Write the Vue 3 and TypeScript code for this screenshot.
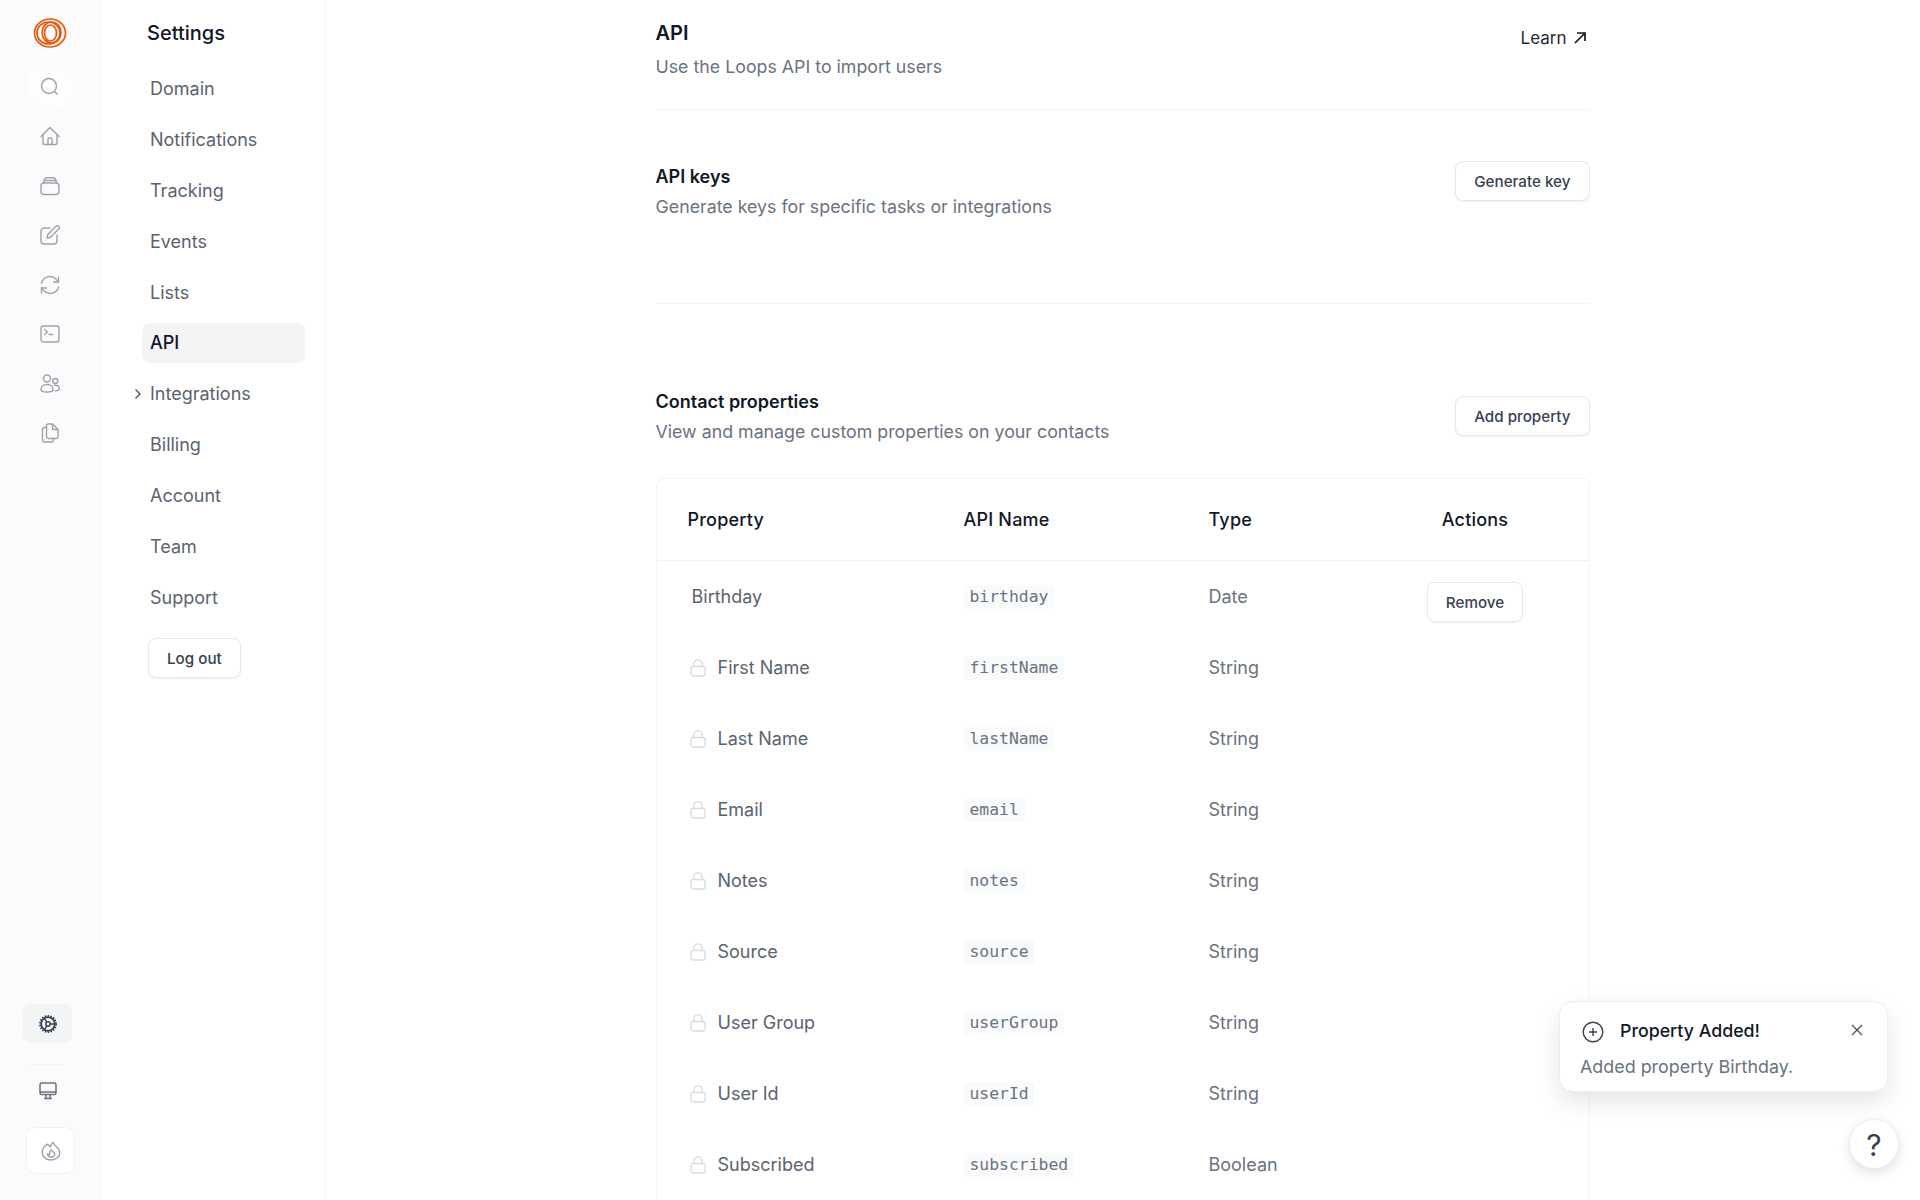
<script setup lang="ts">
type Prop = { label: string; api: string; type: string; locked: boolean };

const navItems = [
  "Domain",
  "Notifications",
  "Tracking",
  "Events",
  "Lists",
  "API",
  "Integrations",
  "Billing",
  "Account",
  "Team",
  "Support",
];

const props: Prop[] = [
  { label: "Birthday", api: "birthday", type: "Date", locked: false },
  { label: "First Name", api: "firstName", type: "String", locked: true },
  { label: "Last Name", api: "lastName", type: "String", locked: true },
  { label: "Email", api: "email", type: "String", locked: true },
  { label: "Notes", api: "notes", type: "String", locked: true },
  { label: "Source", api: "source", type: "String", locked: true },
  { label: "User Group", api: "userGroup", type: "String", locked: true },
  { label: "User Id", api: "userId", type: "String", locked: true },
  { label: "Subscribed", api: "subscribed", type: "Boolean", locked: true },
];
</script>

<template>
  <div class="app">
    <aside class="rail">
      <div class="rail-top">
        <svg class="logo" width="36" height="32" viewBox="0 0 36 32" fill="none" stroke="#e8590c" stroke-width="1.7">
          <ellipse cx="18" cy="16" rx="15.5" ry="14" />
          <ellipse cx="16.5" cy="16" rx="11.5" ry="11" />
          <ellipse cx="19.5" cy="15.5" rx="9.500" ry="10.500" />
          <ellipse cx="18.500" cy="16" rx="6" ry="8" />
        </svg>
        <svg class="ri ri-search" viewBox="0 0 20 20"><circle cx="9" cy="9" r="7.500" /><path d="M14.500 14.500l5 5" /></svg>
        <svg class="ri" viewBox="0 0 20 20"><path d="M1 10.500 10 1.500l9 9" /><path d="M3 8.500V17a1.500 1.500 0 0 0 1.500 1.500h11A1.500 1.500 0 0 0 17 17V8.500" /><path d="M8 18.500V13a1 1 0 0 1 1-1h2a1 1 0 0 1 1 1v5.500" /></svg>
        <svg class="ri" viewBox="0 0 20 20"><rect x="1" y="7" width="18" height="11.500" rx="3" /><path d="M3.500 7 4.600 3.200A2 2 0 0 1 6.500 1.800h7a2 2 0 0 1 1.900 1.400L16.500 7" /><path d="M4 4.500h12" /></svg>
        <svg class="ri" viewBox="0 0 20 20"><path d="M10 3H4a3 3 0 0 0-3 3v10a3 3 0 0 0 3 3h10a3 3 0 0 0 3-3v-6" /><path d="M7 13l.8-3.600L16.500 1a1.800 1.800 0 0 1 2.500 2.500l-8.400 8.700z" /></svg>
        <svg class="ri" viewBox="0 0 20 20"><path d="M1.500 8A8.600 8.600 0 0 1 16 4.200L18.500 7" /><path d="M18.500 2v5h-5" /><path d="M18.500 12A8.600 8.600 0 0 1 4 15.800L1.500 13" /><path d="M1.500 18v-5h5" /></svg>
        <svg class="ri" viewBox="0 0 20 20"><rect x="1" y="2" width="18" height="16" rx="2.500" /><path d="M4.500 5.500 7.500 8l-3 2.500" /><path d="M9 10.500h3.500" /></svg>
        <svg class="ri" viewBox="0 0 20 20"><circle cx="7" cy="4.500" r="3.500" /><circle cx="15.200" cy="7" r="2.500" /><path d="M1 15.500C1 12.500 3.500 10.500 7 10.500s6 2 6 5c0 1.500-2.500 2.500-6 2.500s-6-1-6-2.500z" /><path d="M14.500 11.300c2.600-.4 4.800 1 4.800 3.200 0 1.500-1.800 2.300-4.300 2.400" /></svg>
        <svg class="ri" viewBox="0 0 20 20"><path d="M6.500 4.500H4.200A1.700 1.700 0 0 0 2.500 6.200v11.100A1.700 1.700 0 0 0 4.200 19h7.600a1.700 1.700 0 0 0 1.700-1.700V15.500" /><path d="M6.500 2.700A1.700 1.700 0 0 1 8.200 1h4.300L18 6.500v7.300a1.700 1.700 0 0 1-1.700 1.700H8.200a1.700 1.700 0 0 1-1.700-1.700z" /><path d="M12.500 1v5.500H18" /></svg>
      </div>
      <div class="rail-bottom">
        <div class="gear-box">
          <svg class="gear" width="18" height="18" viewBox="0 0 20 20" fill="none" stroke="#374151">
            <circle cx="10" cy="10" r="7.600" stroke-width="2" />
            <circle cx="10" cy="10" r="9" stroke-width="2" stroke-dasharray="1.600 1.600" />
            <circle cx="10" cy="10" r="2.400" stroke-width="1.600" />
            <path d="M12.300 10H17M8.800 8 6 3.800M8.800 12 6 16.200" stroke-width="1.600" />
          </svg>
        </div>
        <div class="rail-sep"></div>
        <svg class="monitor" width="18" height="18" viewBox="0 0 18 18" fill="none" stroke="#6b7280" stroke-width="1.500">
          <rect x="1" y="1" width="16" height="11.500" rx="2" />
          <path d="M1 10h16" />
          <path d="M7 12.500v3.500M11 12.500v3.500M5 16.500h8" />
        </svg>
        <div class="flame-box">
          <svg class="ri flame" viewBox="0 0 20 20">
            <path d="M6.500 3.200C8 4.400 8.600 5 9.200 6 9.800 4 10.800 2.200 12.200 1.200 12.400 3.400 13.600 4.400 15.400 5.800 17.400 7.400 18.800 9.400 18.800 11.800 18.800 16.200 14.800 19 10 19 5.200 19 1.200 15.800 1.200 11.400 1.200 8 3.400 5 6.500 3.200Z" />
            <path d="M10.200 8.600C10.400 10 12.400 10.400 13.400 12 14.400 14 13 16 10.200 16 7.600 16 6.200 14.400 6.600 12.600 7.200 13.600 8 13.800 8.600 13.600 8.400 11.800 9 10 10.200 8.600Z" />
          </svg>
        </div>
      </div>
    </aside>

    <nav class="side">
      <h2 class="side-title">Settings</h2>
      <ul class="side-list">
        <li v-for="item in navItems" :key="item" class="side-item" :class="{ 'side-item--active': item === 'API' }">
          <svg v-if="item === 'Integrations'" class="caret" width="8" height="12" viewBox="0 0 8 12" fill="none" stroke="#4b5563" stroke-width="1.400">
            <path d="M1.500 1.500 6 6l-4.500 4.500" />
          </svg>
          {{ item }}
        </li>
      </ul>
      <button class="btn logout">Log out</button>
    </nav>

    <main class="main">
      <div class="content">
        <header class="head">
          <div>
            <h1 class="head-title">API</h1>
            <p class="sub">Use the Loops API to import users</p>
          </div>
          <a class="learn">
            Learn
            <svg width="14" height="14" viewBox="0 0 14 14" fill="none" stroke="#111827" stroke-width="1.700">
              <path d="M2 12 12 2M4 2h8v8" />
            </svg>
          </a>
        </header>

        <section class="sec sec-keys">
          <div>
            <h3 class="sec-title">API keys</h3>
            <p class="sub">Generate keys for specific tasks or integrations</p>
          </div>
          <button class="btn">Generate key</button>
        </section>

        <section class="sec sec-props">
          <div>
            <h3 class="sec-title">Contact properties</h3>
            <p class="sub">View and manage custom properties on your contacts</p>
          </div>
          <button class="btn">Add property</button>
        </section>

        <div class="table">
          <div class="row row-head">
            <div class="cell cell-name">Property</div>
            <div class="cell">API Name</div>
            <div class="cell">Type</div>
            <div class="cell cell-act">Actions</div>
          </div>
          <div v-for="p in props" :key="p.api" class="row">
            <div class="cell cell-name prop-name" :class="{ 'prop-name--plain': !p.locked }">
              <svg v-if="p.locked" class="lock" width="16" height="18" viewBox="0 0 16 18" fill="none" stroke="#d8dbe0" stroke-width="1.300">
                <rect x="1" y="7.500" width="14" height="9.500" rx="2" />
                <path d="M3.800 7.500V5a4.200 4.200 0 0 1 8.400 0v2.500" />
              </svg>
              {{ p.label }}
            </div>
            <div class="cell"><code class="code">{{ p.api }}</code></div>
            <div class="cell cell-type">{{ p.type }}</div>
            <div class="cell cell-act">
              <button v-if="!p.locked" class="btn remove">Remove</button>
            </div>
          </div>
        </div>
      </div>
    </main>

    <div class="toast">
      <div class="toast-head">
        <svg class="toast-icon" width="22" height="22" viewBox="0 0 22 22" fill="none" stroke="#374151" stroke-width="1.400">
          <circle cx="11" cy="11" r="9.800" />
          <path d="M11 7v8M7 11h8" />
        </svg>
        <span class="toast-title">Property Added!</span>
        <svg class="toast-x" width="12" height="12" viewBox="0 0 12 12" fill="none" stroke="#4b5563" stroke-width="1.400">
          <path d="M1 1l10 10M11 1 1 11" />
        </svg>
      </div>
      <p class="toast-body">Added property Birthday.</p>
    </div>

    <button class="help">?</button>
  </div>
</template>

<style>
html,
body {
  margin: 0;
  height: 100%;
  overflow: hidden;
  background: #fff;
}
</style>

<style scoped>
.app {
  display: flex;
  height: 1200px;
  overflow: hidden;
  font-family: Inter, "Liberation Sans", sans-serif;
  color: #111827;
  background: #fff;
}

.rail {
  flex: 0 0 101px;
  box-sizing: border-box;
  display: flex;
  flex-direction: column;
  justify-content: space-between;
  background: #fbfbfc;
  border-right: 1px solid #f5f5f6;
}

.rail-top {
  display: flex;
  flex-direction: column;
  align-items: center;
  padding-top: 17px;
  gap: 29.500px;
}

.logo {
  margin-bottom: -2px;
}

.ri {
  width: 20px;
  height: 20px;
  fill: none;
  stroke: #9ca3af;
  stroke-width: 1.400;
  stroke-linecap: round;
  stroke-linejoin: round;
}

.ri-search {
  border-radius: 8px;
  background: #fdfdfe;
  box-shadow: 0 0 0 13px #fdfdfe;
}

.rail-bottom {
  display: flex;
  flex-direction: column;
  padding-bottom: 26px;
}

.gear-box {
  box-sizing: border-box;
  width: 49px;
  height: 39px;
  margin-left: 23px;
  border-radius: 8px;
  background: #f3f4f6;
  display: flex;
  align-items: center;
  justify-content: center;
}

.rail-sep {
  width: 33px;
  height: 1px;
  margin: 21px 0 0 31px;
  background: #f3f4f6;
}

.monitor {
  margin: 17px 0 0 39px;
}

.flame-box {
  box-sizing: border-box;
  width: 49px;
  height: 47px;
  margin: 27px 0 0 26px;
  border: 1px solid #f1f2f4;
  border-radius: 10px;
  background: #fff;
  display: flex;
  align-items: center;
  justify-content: center;
}

.side {
  flex: 0 0 224px;
  box-sizing: border-box;
  border-right: 1px solid #f3f4f6;
  padding: 20px 19px 0 41px;
}

.side-title {
  margin: 0;
  padding-left: 5px;
  font-size: 20px;
  line-height: 26px;
  font-weight: 500;
}

.side-list {
  list-style: none;
  margin: 22.500px 0 0;
  padding: 0;
  display: flex;
  flex-direction: column;
  gap: 10.900px;
}

.side-item {
  position: relative;
  height: 40px;
  padding-left: 8px;
  border-radius: 8px;
  display: flex;
  align-items: center;
  font-size: 18px;
  color: #5b6370;
}

.side-item--active {
  background: #f3f4f6;
  color: #111827;
  font-weight: 500;
}

.caret {
  position: absolute;
  left: -8px;
  top: 14px;
}

.btn {
  box-sizing: border-box;
  height: 40px;
  padding: 0 18px;
  border: 1px solid #e5e7eb;
  border-radius: 8px;
  background: #fff;
  box-shadow: 0 1px 2px rgba(0, 0, 0, 0.06);
  font-family: inherit;
  font-size: 15.200px;
  font-weight: 450;
  color: #374151;
}

.logout {
  display: block;
  margin: 21px 0 0 6px;
}

.main {
  flex: 1;
  min-width: 0;
}

.content {
  width: 934px;
  margin: 0 auto;
}

.head {
  box-sizing: border-box;
  height: 110px;
  padding-top: 20px;
  display: flex;
  justify-content: space-between;
  align-items: flex-start;
  border-bottom: 1px solid #f3f4f6;
}

.head-title {
  margin: 0;
  font-size: 20px;
  line-height: 26px;
  font-weight: 600;
}

.sub {
  margin: 8px 0 0;
  font-size: 17.800px;
  line-height: 26px;
  color: #6b7280;
}

.learn {
  display: flex;
  align-items: center;
  gap: 6px;
  margin-top: 6px;
  padding-right: 3px;
  font-size: 17px;
  line-height: 24px;
  color: #1f2937;
}

.sec {
  display: flex;
  justify-content: space-between;
  align-items: flex-start;
}

.sec-keys {
  box-sizing: border-box;
  height: 194px;
  padding-top: 55px;
  border-bottom: 1px solid #f3f4f6;
}

.sec-keys .btn {
  flex: none;
  margin-top: -4px;
}

.sec-props {
  box-sizing: border-box;
  height: 174px;
  padding-top: 86px;
}

.sec-props .btn {
  flex: none;
  margin-top: 6px;
}

.sec-title {
  margin: 0;
  font-size: 18px;
  line-height: 24px;
  font-weight: 600;
}

.sec .sub {
  margin-top: 5px;
}

.table {
  box-sizing: border-box;
  border: 1px solid #f3f4f6;
  border-bottom: 0;
  border-radius: 8px 8px 0 0;
}

.row {
  display: grid;
  grid-template-columns: 307px 245px 153px 1fr;
  align-items: center;
  height: 71px;
  font-size: 18px;
  color: #5b6370;
}

.row-head {
  height: 81px;
  border-bottom: 1px solid #f3f4f6;
  color: #111827;
  font-weight: 450;
  letter-spacing: 0.2px;
}

.cell-name {
  padding-left: 31px;
}

.prop-name {
  display: flex;
  align-items: center;
  gap: 12px;
  padding-left: 33px;
}

.prop-name--plain {
  padding-left: 35px;
}

.cell-type {
  color: #6b7280;
}

.cell-act {
  text-align: center;
}

.remove {
  margin-top: 11px;
}

.code {
  display: inline-block;
  padding: 0 6px;
  border-radius: 4px;
  background: #f9fafb;
  font-family: "DejaVu Sans Mono", monospace;
  font-size: 16.400px;
  line-height: 24px;
  color: #6b7280;
}

.toast {
  position: absolute;
  left: 1559px;
  top: 1001px;
  box-sizing: border-box;
  width: 329px;
  height: 91px;
  padding: 15px 20px;
  background: #fff;
  border: 1px solid #eceef1;
  border-radius: 14px;
  box-shadow: 0 10px 24px rgba(0, 0, 0, 0.1);
}

.toast-head {
  display: flex;
  align-items: center;
  height: 26px;
}

.toast-icon {
  margin: 4px 0 0 2px;
}

.toast-title {
  margin-left: 16px;
  font-size: 17.800px;
  font-weight: 450;
  color: #111827;
}

.toast-x {
  margin-left: auto;
  margin-right: 4px;
}

.toast-body {
  margin: 12px 0 0;
  font-size: 17.900px;
  line-height: 24px;
  color: #6b7280;
}

.help {
  position: absolute;
  left: 1849px;
  top: 1119px;
  width: 50px;
  height: 50px;
  padding: 2px 0 0;
  border: 1px solid #eceef1;
  border-radius: 50%;
  background: #fff;
  box-shadow: 0 4px 12px rgba(0, 0, 0, 0.12);
  font-family: inherit;
  font-size: 30px;
  color: #374151;
}
</style>
